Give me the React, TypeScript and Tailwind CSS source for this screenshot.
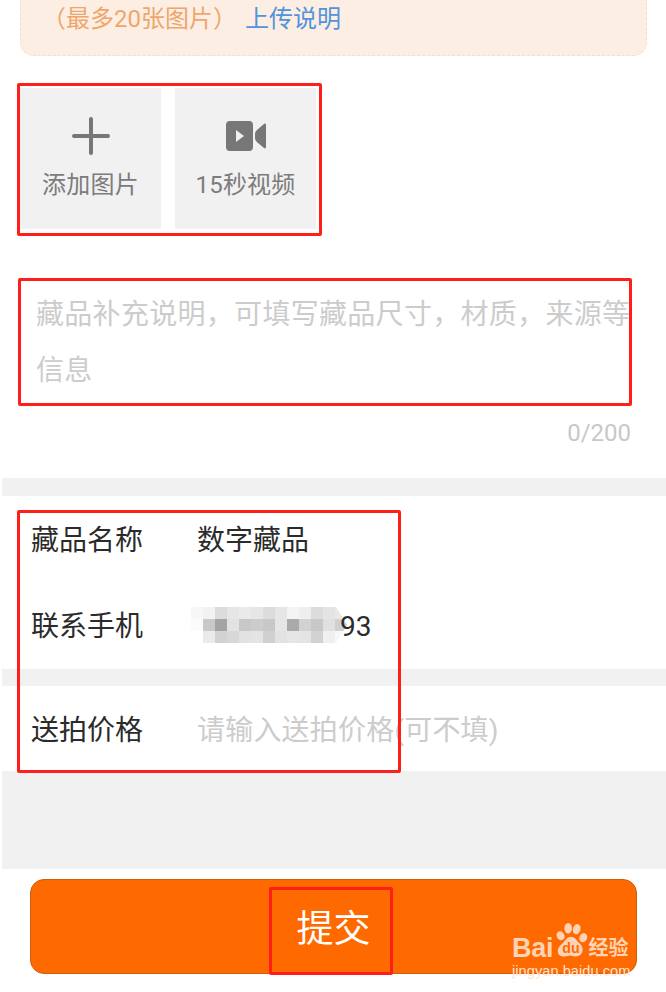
const mosaic = [
  ["#f7f7f7", "#f2f2f2", "#dcdcdc", "#e6e6e6", "#eaeaea", "#e6e6e6", "#dcdcdc", "#e6e6e6", "#f4f4f4", "#eeeeee", "#dcdcdc", "#e4e4e4", "#e8e8e8"],
  ["#fbfbfb", "#c8c8c8", "#a4a4a4", "#e2e2e2", "#c8c8c8", "#cccccc", "#c8c8c8", "#e6e6e6", "#aaaaaa", "#d2d2d2", "#c8c8c8", "#e0e0e0", "#d0d0d0"],
  ["#ffffff", "#eaeaea", "#d2d2d2", "#d8d8d8", "#e2e2e2", "#e4e4e4", "#d0d0d0", "#e2e2e2", "#e6e6e6", "#e4e4e4", "#d2d2d2", "#f0f0f0", "#f8f8f8"],
];

function Band({ className }: { className: string }) {
  return <div className={`ml-[2px] bg-[#f1f1f1] ${className}`} />;
}

function RedBox({ className }: { className: string }) {
  return <div className={`absolute rounded-[2px] border-[3px] border-[#ff1f1a] ${className}`} />;
}

function UploadTile({ icon, label }: { icon: React.ReactNode; label: string }) {
  return (
    <div className="flex h-[141px] w-[141px] flex-col items-center bg-[#f1f1f1] pt-[28px]">
      <div className="flex h-[40px] items-center justify-center">{icon}</div>
      <span className="mt-[11px] text-[24px] leading-[36px] tracking-[0.2px] text-[#7c7c7c]">{label}</span>
    </div>
  );
}

function Row({ label, children, className }: { label: string; children: React.ReactNode; className: string }) {
  return (
    <div className={`flex items-center pl-[31px] ${className}`}>
      <span className="w-[166px] shrink-0 text-[28px] leading-[40px] text-[#2b2b2b]">{label}</span>
      {children}
    </div>
  );
}

function BaiduMark() {
  return (
    <div className="absolute left-[512px] top-[921px] w-[125px] text-[#ffd3b5]">
      <div className="flex h-[38px] items-end">
        <span className="font-['Liberation_Sans',sans-serif] text-[27px] font-bold leading-[22px] tracking-[-0.2px]">Bai</span>
        <svg width="34" height="37" viewBox="0 0 36 38" className="ml-[1px]">
          <g fill="#ffd3b5">
            <ellipse cx="7" cy="14" rx="4" ry="5" transform="rotate(-30 7 14)" />
            <ellipse cx="15" cy="6" rx="4" ry="5.5" />
            <ellipse cx="24" cy="7" rx="4" ry="5.5" transform="rotate(15 24 7)" />
            <ellipse cx="31" cy="16" rx="4" ry="5" transform="rotate(25 31 16)" />
            <path d="M18 15c4 0 6 4 9 7 3 3 4 6 3 9-1 4-5 5-8 5-2 0-3-1-5-1s-3 1-6 1c-4 0-7-2-7-6 0-4 3-6 6-9 3-3 4-6 8-6z" />
          </g>
          <text x="18" y="32" textAnchor="middle" fontSize="15" fontWeight="700" fill="#ff6a00" fontFamily="Liberation Sans, sans-serif">du</text>
        </svg>
        <span className="text-[20px] font-bold leading-[22px]">经验</span>
      </div>
      <div className="mt-[3px] font-['Liberation_Sans',sans-serif] text-[14.6px] leading-[18px] tracking-[0.05px] text-[#ffe4d2]">jingyan.baidu.com</div>
    </div>
  );
}

export default function App() {
  return (
    <div className="relative h-[992px] w-[666px] overflow-hidden bg-white font-['Roboto','Noto_Sans_CJK_SC','Noto_Sans',sans-serif]">
      {/* Notice */}
      <div className="mx-[20px] flex h-[56px] w-[627px] items-start rounded-b-[14px] border-x border-b border-dashed border-[#f3dfd0] bg-[#fdeee4] pl-[21px]">
        <span className="mt-[1px] text-[24px] leading-[36px] text-[#efa66c]">（最多20张图片）</span>
        <span className="mt-[1px] ml-[8px] text-[24px] leading-[36px] text-[#4f94dc]">上传说明</span>
      </div>

      {/* Upload tiles */}
      <div className="mt-[32px] flex gap-[14px] pl-[20px]">
        <UploadTile
          label="添加图片"
          icon={
            <svg width="38" height="38" viewBox="0 0 38 38">
              <path d="M19 2v34M2 19h34" stroke="#777777" strokeWidth="4" strokeLinecap="round" />
            </svg>
          }
        />
        <UploadTile
          label="15秒视频"
          icon={
            <svg width="40" height="30" viewBox="0 0 40 30">
              <rect x="0" y="0" width="27" height="30" rx="4" fill="#777777" />
              <path d="M10 9l8 6-8 6z" fill="#f1f1f1" />
              <path d="M29 13c0-2 1-3 3-5l6-5c1-1 2 0 2 1v22c0 1-1 2-2 1l-6-5c-2-2-3-3-3-5z" fill="#777777" />
            </svg>
          }
        />
      </div>

      {/* Description */}
      <div className="mt-[58px] pl-[36px] pr-[30px] text-[28px] leading-[56px] tracking-[0.3px] text-[#cccccc]">
        藏品补充说明，可填写藏品尺寸，材质，来源等信息
      </div>
      <div className="mt-[16px] pr-[35px] text-right text-[24px] leading-[36px] text-[#c8c8c8]">0/200</div>

      <Band className="mt-[27px] h-[18px]" />

      <Row label="藏品名称" className="mt-[25px]">
        <span className="text-[28px] leading-[40px] text-[#2b2b2b]">数字藏品</span>
      </Row>

      <Row label="联系手机" className="mt-[46px]">
        <div className="-mt-[4px] -ml-[6px] grid h-[36px] grid-cols-[repeat(13,12px)] grid-rows-[repeat(3,12px)] [clip-path:polygon(0_0,93%_0,100%_50%,93%_100%,0_100%)]">
          {mosaic.flat().map((c, i) => (
            <div key={i} style={{ backgroundColor: c }} />
          ))}
        </div>
        <span className="relative -ml-[7px] text-[28px] leading-[40px] text-[#2b2b2b]">93</span>
      </Row>

      <Band className="mt-[22px] h-[17px]" />

      <Row label="送拍价格" className="mt-[25px]">
        <span className="text-[28px] leading-[40px] tracking-[0.2px] text-[#cccccc]">请输入送拍价格(可不填)</span>
      </Row>

      <Band className="mt-[20px] h-[98px]" />

      {/* Submit */}
      <div className="mx-[30px] mt-[10px] flex h-[95px] w-[607px] items-center justify-center rounded-[14px] border border-[#c8600f] bg-[#ff6a00] pt-[6px]">
        <span className="text-[37px] leading-[50px] text-white">提交</span>
      </div>

      {/* Red annotation boxes */}
      <RedBox className="left-[17px] top-[83px] h-[153px] w-[305px]" />
      <RedBox className="left-[18px] top-[278px] h-[128px] w-[614px]" />
      <RedBox className="left-[17px] top-[510px] h-[263px] w-[384px]" />
      <RedBox className="left-[269px] top-[887px] h-[88px] w-[124px]" />

      <BaiduMark />
    </div>
  );
}
